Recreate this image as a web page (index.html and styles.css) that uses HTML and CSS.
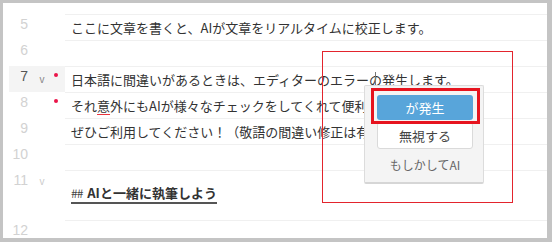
FILE: index.html
```html
<!DOCTYPE html>
<html lang="ja">
<head>
<meta charset="utf-8">
<link rel="stylesheet" href="styles.css">
</head>
<body>
<div class="frame">
  <div class="editor">
    <div class="spacer"></div>
    <div class="row">
      <div class="gutter"><span class="num">5</span><span class="fold"></span></div>
      <div class="line">ここに文章を書くと、AIが文章をリアルタイムに校正します。</div>
    </div>
    <div class="row">
      <div class="gutter"><span class="num">6</span><span class="fold"></span></div>
      <div class="line"></div>
    </div>
    <div class="row">
      <div class="gutter active"><span class="num">7</span><span class="fold">v</span><span class="dot"></span></div>
      <div class="line">日本語に間違いがあるときは、エディターのエラーの<span class="caret"></span>発生します。</div>
    </div>
    <div class="row">
      <div class="gutter"><span class="num">8</span><span class="fold"></span><span class="dot"></span></div>
      <div class="line">それ<span class="typo">意</span>外にもAIが様々なチェックをしてくれて便利</div>
    </div>
    <div class="row">
      <div class="gutter"><span class="num">9</span><span class="fold"></span></div>
      <div class="line">ぜひご利用してください！（敬語の間違い修正は有</div>
    </div>
    <div class="row">
      <div class="gutter"><span class="num">10</span><span class="fold"></span></div>
      <div class="line"></div>
    </div>
    <div class="row row-tall">
      <div class="gutter"><span class="num">11</span><span class="fold fold-light">v</span></div>
      <div class="line line-heading"><span class="heading"><span class="hash">##</span> AIと一緒に執筆しよう</span></div>
    </div>
    <div class="row row-last">
      <div class="gutter"><span class="num">12</span><span class="fold"></span></div>
      <div class="line"></div>
    </div>
  </div>

  <div class="popup">
    <div class="btn btn-primary">が発生</div>
    <div class="btn btn-plain">無視する</div>
    <div class="popup-note">もしかしてAI</div>
  </div>
  <div class="mark-thick"></div>
  <div class="mark-thin"></div>
</div>
</body>
</html>
```

FILE: styles.css
```css
html, body {
  margin: 0;
  padding: 0;
  background: #fff;
}

.frame {
  position: relative;
  width: 552px;
  height: 242px;
  box-sizing: border-box;
  border: 3px solid #c4c4c4;
  border-right-width: 5px;
  border-bottom-width: 4px;
  background: #fff;
  overflow: hidden;
  font-family: "Noto Sans CJK JP", "Noto Sans", sans-serif;
  color: #333;
}

.editor {
  display: flex;
  flex-direction: column;
}

.spacer {
  height: 11px;
}

.row {
  display: flex;
  height: 26px;
}

.row-tall {
  height: 50px;
}

.row-last {
  height: 18px;
}

.gutter {
  width: 56px;
  margin-left: 6px;
  display: flex;
  align-items: flex-start;
}

.gutter.active {
  background: #f4f4f4;
}

.num {
  width: 19px;
  text-align: right;
  font-family: "Liberation Sans", Arial, sans-serif;
  font-size: 14px;
  line-height: 20px;
  color: #d2d2d2;
}

.active .num {
  color: #555;
}

.fold {
  width: 8px;
  margin-left: 10px;
  font-family: "Liberation Sans", Arial, sans-serif;
  font-size: 10px;
  line-height: 10px;
  padding-top: 9px;
  text-align: center;
  color: #888;
}

.fold-light {
  color: #ccc;
  padding-top: 7px;
}

.dot {
  width: 4px;
  height: 4px;
  margin-left: 8px;
  margin-top: 7px;
  border-radius: 50%;
  background: #ea1449;
}

.line {
  flex: 1;
  border-top: 1px solid #f0f0f0;
  padding-left: 6px;
  font-size: 13px;
  line-height: 25px;
  white-space: nowrap;
  overflow: hidden;
}

.caret {
  display: inline-block;
  width: 1px;
  height: 16px;
  margin-left: -7px;
  margin-right: 6px;
  background: #777;
  vertical-align: -3px;
}

.typo {
  text-decoration: underline;
  text-decoration-color: #e8343c;
  text-underline-offset: 3px;
}

.line-heading {
  padding-top: 13px;
  line-height: 18px;
}

.heading {
  display: inline-block;
  font-weight: bold;
  font-size: 13px;
  line-height: 18px;
  border-bottom: 2px solid #555;
  color: #333;
}

.hash {
  font-weight: normal;
  color: #444;
  font-size: 12px;
  letter-spacing: -1px;
  margin-right: 2px;
}

.popup {
  position: absolute;
  left: 361px;
  top: 82px;
  width: 120px;
  height: 99px;
  box-sizing: border-box;
  background: #f4f4f4;
  border: 1px solid #dcdcdc;
  border-bottom: 2px solid #d6d6d6;
  border-radius: 2px;
  padding: 9px 0 0 12px;
  display: flex;
  flex-direction: column;
}

.btn {
  width: 96px;
  box-sizing: border-box;
  border-radius: 3px;
  text-align: center;
  font-size: 13px;
}

.btn-primary {
  height: 25px;
  line-height: 25px;
  background: #58a5da;
  color: #fff;
}

.btn-plain {
  margin-top: 2px;
  height: 27px;
  line-height: 25px;
  background: #fff;
  border: 1px solid #dadada;
  color: #444;
}

.popup-note {
  width: 96px;
  margin-top: 7px;
  text-align: center;
  font-size: 12px;
  line-height: 18px;
  color: #666;
}

.mark-thick {
  position: absolute;
  left: 368px;
  top: 85px;
  width: 109px;
  height: 36px;
  box-sizing: border-box;
  border: 3px solid #e6141f;
  pointer-events: none;
}

.mark-thin {
  position: absolute;
  left: 319px;
  top: 48px;
  width: 191px;
  height: 152px;
  box-sizing: border-box;
  border: 1px solid #e3242d;
  pointer-events: none;
}
```
